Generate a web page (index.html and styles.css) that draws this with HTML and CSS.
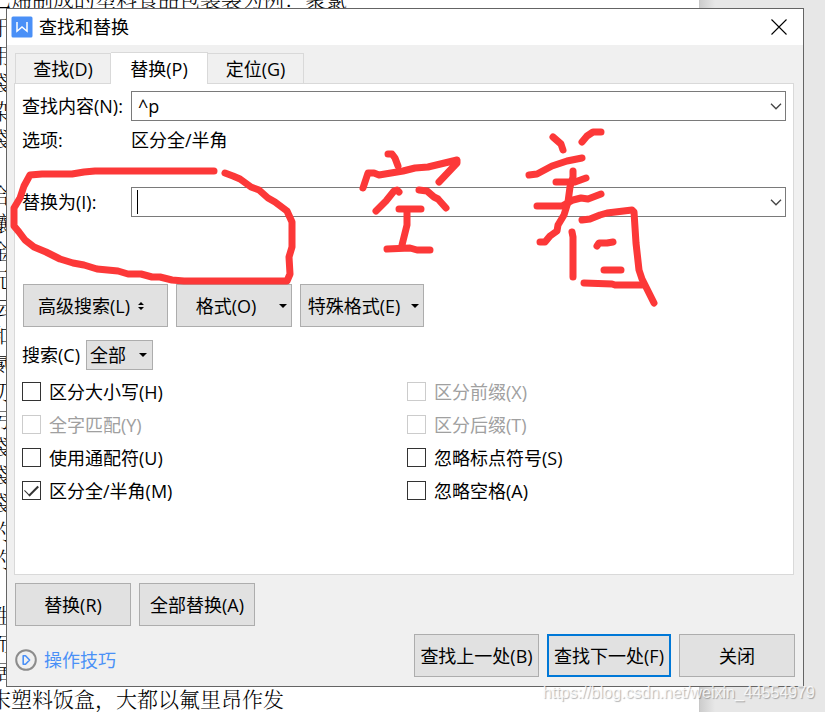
FILE: index.html
```html
<!DOCTYPE html>
<html lang="zh-CN">
<head>
  <meta charset="UTF-8" />
  <meta name="viewport" content="width=device-width, initial-scale=1.0"/>
  <title>查找和替换</title>
  <link rel="stylesheet" href="styles.css">
</head>
<body>

<div class="workspace">
  <!-- document behind the dialog -->
  <div class="document">
    <p>乙烯制成的塑料食品包装袋为例：聚氯</p>
    <p>于</p>
    <p>用</p>
    <p>袋</p>
    <p>染</p>
    <p>袋</p>
    <p>、</p>
    <p>合</p>
    <p>镶</p>
    <p>金</p>
    <p>元</p>
    <p>坛</p>
    <p>和</p>
    <p>氯</p>
    <p>切</p>
    <p>污</p>
    <p>袋</p>
    <p>袋</p>
    <p>袋</p>
    <p>的</p>
    <p>的</p>
    <p>&nbsp;</p>
    <p>性</p>
    <p>而</p>
    <p>据</p>
    <p>末塑料饭盒，大都以氟里昂作发</p>
  </div>

  <div class="dialog" role="dialog" aria-labelledby="dialogTitle">
    <div class="title-bar">
      <svg class="app-icon" viewBox="0 0 22 22">
        <rect x="0.5" y="0.5" width="21" height="21" rx="1.5" fill="#4a90f7"/>
        <path d="M6 6V15.2L11 11L16 15.2V6" fill="none" stroke="#fff" stroke-width="1.5"/>
      </svg>
      <h1 id="dialogTitle">查找和替换</h1>
      <button type="button" class="btn-close" aria-label="关闭">
        <svg viewBox="0 0 16 16"><path d="M0.5 0.5L15.5 15.5M15.5 0.5L0.5 15.5" fill="none" stroke="#000" stroke-width="1.1"/></svg>
      </button>
    </div>

    <form class="dialog-body">
      <div class="tabs" role="tablist">
        <button type="button" class="tab" role="tab">查找(D)</button>
        <button type="button" class="tab active" role="tab" aria-selected="true">替换(P)</button>
        <button type="button" class="tab" role="tab">定位(G)</button>
      </div>

      <div class="panel">
        <div class="field">
          <label for="findText">查找内容(N):</label>
          <div class="combo">
            <input type="text" id="findText" value="^p" />
            <button type="button" class="combo-arrow" aria-label="展开">
              <svg viewBox="0 0 12 7"><path d="M1 0.8L6 5.8L11 0.8" fill="none" stroke="#444" stroke-width="1.3"/></svg>
            </button>
          </div>
        </div>
        <div class="field options">
          <span class="field-name">选项:</span>
          <span>区分全/半角</span>
        </div>
        <div class="field">
          <label for="replaceText">替换为(I):</label>
          <div class="combo">
            <span class="caret"></span>
            <input type="text" id="replaceText" value="" />
            <button type="button" class="combo-arrow" aria-label="展开">
              <svg viewBox="0 0 12 7"><path d="M1 0.8L6 5.8L11 0.8" fill="none" stroke="#444" stroke-width="1.3"/></svg>
            </button>
          </div>
        </div>

        <div class="button-row format-row">
          <button type="button" class="btn btn-advanced">高级搜索(L)
            <svg class="updown" viewBox="0 0 6 8"><path d="M3 0L6 3H0ZM3 8L0 5H6Z"/></svg>
          </button>
          <button type="button" class="btn btn-menu">
            <span>格式(O)</span>
            <svg class="arrow" viewBox="0 0 8 4"><path d="M0 0H8L4 4Z"/></svg>
          </button>
          <button type="button" class="btn btn-menu btn-special">
            <span>特殊格式(E)</span>
            <svg class="arrow" viewBox="0 0 8 4"><path d="M0 0H8L4 4Z"/></svg>
          </button>
        </div>

        <div class="search-row">
          <label for="searchScope">搜索(C)</label>
          <div class="select-box">
            <select id="searchScope">
              <option>全部</option>
              <option>向上</option>
              <option>向下</option>
            </select>
            <svg class="arrow" viewBox="0 0 8 4"><path d="M0 0H8L4 4Z"/></svg>
          </div>
        </div>

        <div class="checks">
          <label class="check"><input type="checkbox" /><span>区分大小写(H)</span></label>
          <label class="check disabled"><input type="checkbox" disabled /><span>区分前缀(X)</span></label>
          <label class="check disabled"><input type="checkbox" disabled /><span>全字匹配(Y)</span></label>
          <label class="check disabled"><input type="checkbox" disabled /><span>区分后缀(T)</span></label>
          <label class="check"><input type="checkbox" /><span>使用通配符(U)</span></label>
          <label class="check"><input type="checkbox" /><span>忽略标点符号(S)</span></label>
          <label class="check"><input type="checkbox" checked /><span>区分全/半角(M)</span></label>
          <label class="check"><input type="checkbox" /><span>忽略空格(A)</span></label>
        </div>
      </div>

      <div class="button-row">
        <button type="button" class="btn">替换(R)</button>
        <button type="button" class="btn">全部替换(A)</button>
      </div>

      <div class="footer">
        <a href="#" class="tips">
          <svg viewBox="0 0 22 22">
            <circle cx="11" cy="11" r="9.8" fill="none" stroke="#8c8c8c" stroke-width="2"/>
            <path d="M8.2 6.8H10.5L14.6 11L10.5 15.2H8.2Z" fill="none" stroke="#4a90f7" stroke-width="1.6" stroke-linejoin="round"/>
          </svg>
          <span>操作技巧</span>
        </a>
        <div class="button-row">
          <button type="button" class="btn btn-find">查找上一处(B)</button>
          <button type="submit" class="btn btn-find btn-default">查找下一处(F)</button>
          <button type="button" class="btn">关闭</button>
        </div>
      </div>
    </form>
  </div>

  <!-- red pen marks -->
  <svg class="pen" width="825" height="712" viewBox="0 0 825 712">
    <path d="M214 171H95L84 172L72 174H42L30 175L24 186L20 198L14 208V226L19 232L25 240L34 247L46 252L60 259L73 263L84 265L97 269L118 271L128 274H141L152 277H160L172 280L184 281H287L290 274L289 257L292 247V222L287 211L275 202L268 198L259 190L251 187L240 179L233 176L225 173"/>
    <path d="M388 154H392L395 158L398 166"/>
    <path d="M363 188L368 173H374L379 175L403 171L415 168L428 167L457 160V163L439 182"/>
    <path d="M399 192L397 190L394 191L386 201L376 211"/>
    <path d="M419 190L427 191L434 197L438 199L446 208"/>
    <path d="M399 209H421M407 210V225L402 245M387 249L410 248L417 250H430"/>
    <path d="M553 137L561 144L563 150M582 142L587 136L593 132L601 132"/>
    <path d="M529 175L537 174L552 166L567 161L582 158"/>
    <path d="M556 182H575L586 178M537 206H562L573 200L581 198L588 199L601 194"/>
    <path d="M573 171V177L570 187L568 202L564 215L558 225L557 231L550 236L545 242H540"/>
    <path d="M572 232L573 237V277"/>
    <path d="M582 220L590 219L600 215L607 213L632 210L634 212L636 243L639 270L642 279L654 303"/>
    <path d="M597 246L599 243L607 243L613 242M604 270H621M584 283L612 284L615 285H642"/>
  </svg>

  <div class="watermark">https://blog.csdn.net/weixin_44554979</div>
</div>

</body>
</html>
```
FILE: styles.css
```css
* {
  box-sizing: border-box;
}

body {
  margin: 0;
  background: #e7e7e7;
  color: #000;
  font-family: "Open Sans", "Noto Sans CJK SC", sans-serif;
  font-size: 18px;
  line-height: 24px;
}

button,
input,
select {
  font: inherit;
  color: inherit;
}

svg {
  display: block;
  flex: none;
}

.workspace {
  position: relative;
  height: 100vh;
  min-height: 700px;
  overflow: hidden;
  background: linear-gradient(to right, #cbcbcb, #e7e7e7 16px) no-repeat 699px 0 / 100% 100%;
}

/* Document */
.document {
  width: 700px;
  height: 100%;
  background: #fff;
  border-right: 1px solid #c8c8c8;
  font-family: "Noto Serif CJK SC", "Noto Sans CJK SC", serif;
  font-size: 21px;
  font-weight: 300;
  line-height: 28px;
  overflow: hidden;
}

.document p {
  margin: 0 0 0 -10px;
  white-space: nowrap;
}

.document p:first-child {
  margin-top: -16px;
}

/* Dialog */
.dialog {
  position: absolute;
  top: 8px;
  left: 6px;
  right: 21px;
  background: #f0f0f0;
  border: 1px solid #646464;
}

.title-bar {
  display: flex;
  align-items: center;
  gap: 6px;
  height: 36px;
  padding: 0 16px 1px 4px;
  background: #fff;
}

.app-icon {
  width: 22px;
  height: 22px;
}

.title-bar h1 {
  flex: 1;
  margin: 0;
  font-size: 18px;
  font-weight: 400;
}

.btn-close {
  padding: 0;
  border: none;
  background: none;
}

.btn-close svg {
  width: 16px;
  height: 16px;
}

.dialog-body {
  padding: 7px 8px 9px;
}

/* Tabs */
.tabs {
  display: flex;
  align-items: flex-end;
}

.tab {
  width: 96px;
  height: 30px;
  padding: 0;
  background: #f0f0f0;
  border: 1px solid #d9d9d9;
  border-bottom: none;
}

.tab + .tab {
  border-left: none;
}

.tab.active {
  position: relative;
  z-index: 1;
  width: 97px;
  height: 32px;
  margin-bottom: -1px;
  background: #fff;
}

.panel {
  height: 492px;
  margin: 0 1px 8px -1px;
  padding: 7px;
  border: 1px solid #d9d9d9;
  background: #fff;
}

.field {
  display: flex;
  align-items: center;
  height: 30px;
}

.field label,
.field-name {
  width: 109px;
  white-space: nowrap;
}

.options {
  margin: 4px 0 32px;
}

.combo {
  flex: 1;
  display: flex;
  align-items: center;
  height: 30px;
  padding: 0 3px 0 5px;
  border: 1px solid #7a7a7a;
  background: #fff;
}

.combo input {
  flex: 1;
  min-width: 0;
  padding: 0 1px;
  border: none;
  outline: none;
  background: none;
}

.combo-arrow {
  padding: 0;
  border: none;
  background: none;
}

.combo-arrow svg {
  width: 12px;
  height: 7px;
}

.caret {
  width: 1px;
  height: 24px;
  background: #000;
}

/* Buttons */
.button-row {
  display: flex;
  gap: 8px;
}

.btn {
  min-width: 116px;
  height: 43px;
  padding: 0 4px;
  background: #e1e1e1;
  border: 1px solid #adadad;
  white-space: nowrap;
}

.format-row {
  margin: 67px 0 13px 1px;
}

.btn-advanced {
  display: flex;
  align-items: center;
  gap: 8px;
  width: 145px;
  padding: 0 14px;
}

.btn-menu {
  display: flex;
  align-items: center;
  gap: 8px;
}

.btn-menu span {
  flex: 1;
}

.btn-special {
  width: 124px;
}

.btn-find {
  width: 125px;
}

.btn-default {
  width: 124px;
  padding: 0 2px;
  border: 2px solid #0078d7;
}

.updown {
  width: 6px;
  height: 8px;
}

.arrow {
  width: 8px;
  height: 4px;
}

.search-row {
  display: flex;
  align-items: center;
  gap: 6px;
  margin-bottom: 5px;
}

.select-box {
  position: relative;
}

.select-box select {
  appearance: none;
  display: block;
  width: 67px;
  height: 30px;
  padding: 0 3px;
  border: 1px solid #adadad;
  border-radius: 0;
  background: #e1e1e1;
}

.select-box .arrow {
  position: absolute;
  top: 13px;
  right: 6px;
  pointer-events: none;
}

/* Checkboxes */
.checks {
  display: grid;
  grid-template-columns: 385px 1fr;
}

.check {
  display: flex;
  align-items: center;
  gap: 8px;
  height: 33px;
}

.check input {
  appearance: none;
  display: grid;
  place-items: center;
  width: 19px;
  height: 19px;
  margin: 0;
  border: 1px solid #333;
  background: #fff;
}

.check input:checked::before {
  content: "";
  width: 12px;
  height: 6px;
  margin-top: -4px;
  border-left: 1px solid #333;
  border-bottom: 2px solid #333;
  transform: rotate(-45deg);
}

.check.disabled {
  color: #a0a0a0;
}

.check.disabled input {
  border-color: #ccc;
}

/* Footer */
.footer {
  display: flex;
  justify-content: space-between;
  margin-top: 8px;
}

.tips {
  display: flex;
  align-items: center;
  align-self: flex-end;
  gap: 7px;
  height: 34px;
  color: #4a90f7;
  text-decoration: none;
}

.tips svg {
  width: 22px;
  height: 22px;
}

/* Overlays */
.pen {
  position: absolute;
  top: 0;
  left: 0;
  fill: none;
  stroke: #fc3838;
  stroke-width: 7;
  stroke-linecap: round;
  stroke-linejoin: round;
  pointer-events: none;
}

.watermark {
  position: absolute;
  right: 10px;
  bottom: 7px;
  font-family: "Liberation Sans", sans-serif;
  font-size: 16px;
  color: rgba(255, 255, 255, 0.8);
  text-shadow: 1px 1px 1px rgba(0, 0, 0, 0.3);
}
```
